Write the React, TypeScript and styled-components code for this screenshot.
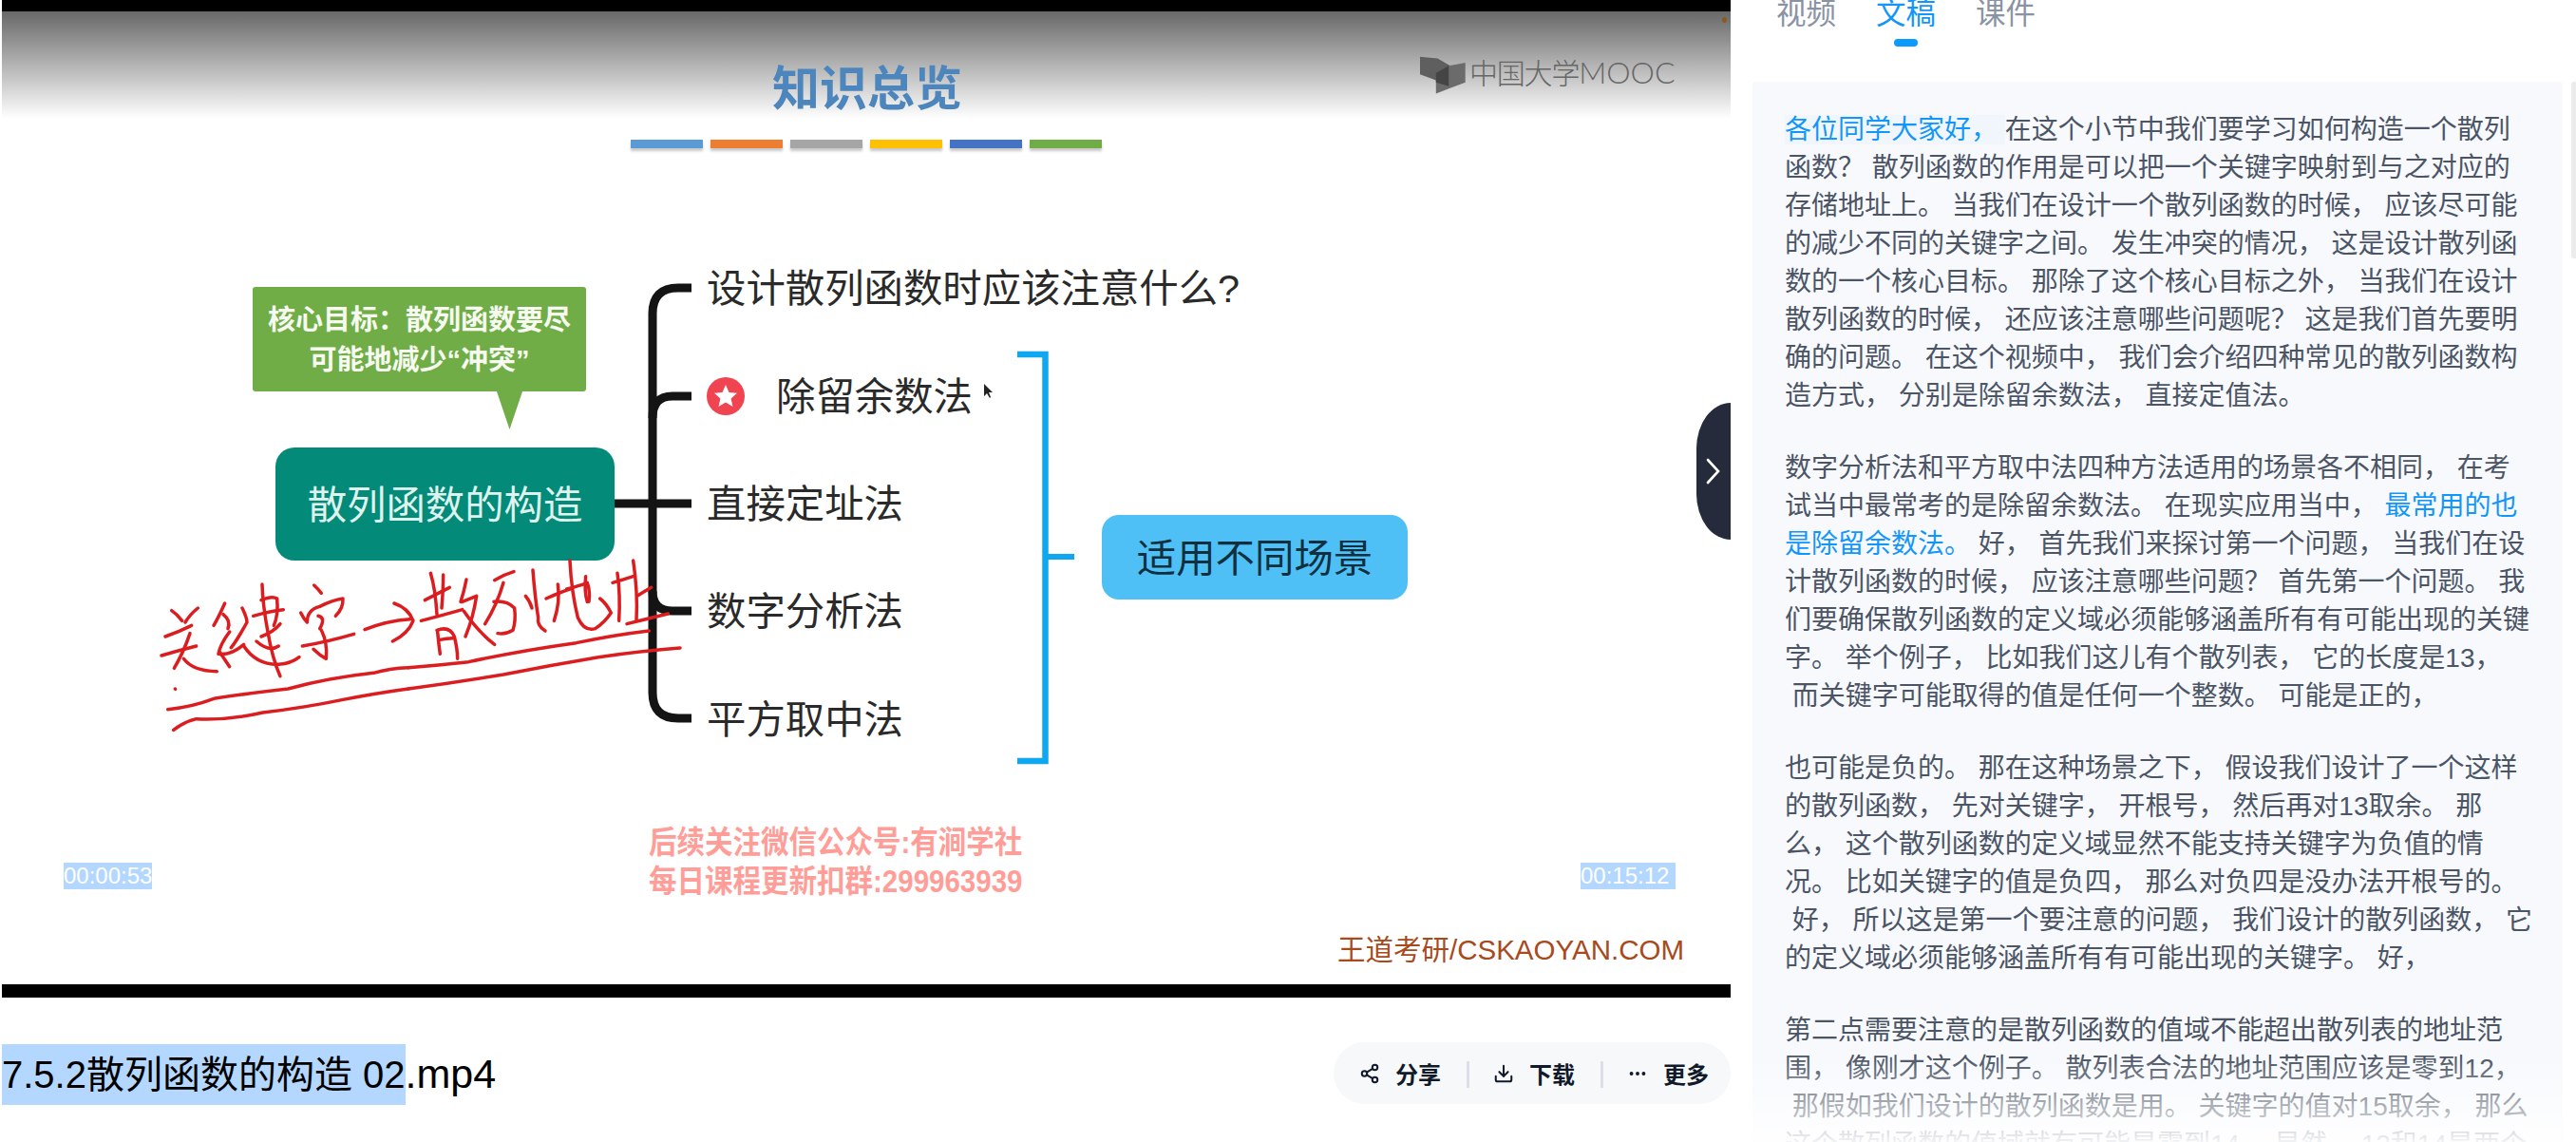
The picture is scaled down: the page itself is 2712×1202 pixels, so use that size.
import React from 'react'
import styled, { createGlobalStyle } from 'styled-components'
import { Download, Ellipsis, Share2 } from 'lucide-react'

const GlobalStyle = createGlobalStyle`
  html, body {
    margin: 0;
    padding: 0;
    background: #fff;
    overflow: hidden;
  }
  body {
    font-family: "Liberation Sans", "Noto Sans CJK SC", sans-serif;
  }
`

const Page = styled.div`
  width: 2712px;
  height: 1202px;
  display: flex;
  overflow: hidden;
`
const Main = styled.main`
  width: 1820px;
  margin-left: 2px;
  display: flex;
  flex-direction: column;
`
const Video = styled.section`
  position: relative;
  height: 1050px;
  box-sizing: border-box;
  border-top: 12px solid #000;
  border-bottom: 14px solid #000;
  background: #fff;
`
const SlideHead = styled.div`
  height: 113px;
  background: linear-gradient(#686868, #fff);
`
const SlideTitle = styled.div`
  position: absolute;
  left: 811px;
  top: 51px;
  font-size: 50px;
  line-height: 62px;
  font-weight: 700;
  color: #4d86bd;
  white-space: nowrap;
`
const Bars = styled.div`
  position: absolute;
  left: 662px;
  top: 135px;
  display: flex;
  gap: 8px;
`
const Bar = styled.div<{ $color: string }>`
  width: 76px;
  height: 9px;
  background: ${(p) => p.$color};
  box-shadow: 0 3px 3px rgba(0, 0, 0, 0.22);
`
const Logo = styled.div`
  position: absolute;
  left: 1493px;
  top: 43px;
  display: flex;
  align-items: center;
  gap: 4px;
  color: #666;
  line-height: 40px;
  font-weight: 300;
  white-space: nowrap;
`
const LogoCn = styled.span`
  font-family: "Noto Sans CJK SC", sans-serif;
  font-size: 30px;
  letter-spacing: -1.2px;
`
const LogoEn = styled.span`
  font-family: "Lato", "Liberation Sans", sans-serif;
  font-size: 32px;
`
const Speck = styled.div`
  position: absolute;
  left: 1811px;
  top: 6px;
  width: 5px;
  height: 6px;
  border-radius: 50%;
  background: #8a5a1e;
`
const Bubble = styled.div`
  position: absolute;
  left: 264px;
  top: 290px;
  width: 351px;
  height: 110px;
  box-sizing: border-box;
  padding-top: 2px;
  border-radius: 3px;
  background: #70ad47;
  color: #f6faf0;
  font-size: 29px;
  line-height: 42px;
  font-weight: 700;
  display: flex;
  flex-direction: column;
  align-items: center;
  justify-content: center;
  white-space: nowrap;

  &::after {
    content: '';
    position: absolute;
    left: 257px;
    top: 110px;
    width: 27px;
    height: 40px;
    background: #70ad47;
    clip-path: polygon(0 0, 100% 0, 50% 100%);
  }
`
const RootNode = styled.div`
  position: absolute;
  left: 288px;
  top: 459px;
  width: 357px;
  height: 119px;
  box-sizing: border-box;
  padding-bottom: 6px;
  border-radius: 20px;
  background: #038a78;
  color: #dff3ee;
  font-size: 41.4px;
  display: flex;
  align-items: center;
  justify-content: center;
  white-space: nowrap;
`
const SceneNode = styled.div`
  position: absolute;
  left: 1158px;
  top: 530px;
  width: 322px;
  height: 89px;
  box-sizing: border-box;
  padding-bottom: 6px;
  border-radius: 18px;
  background: #4fc0f6;
  color: #10303f;
  font-size: 41.4px;
  display: flex;
  align-items: center;
  justify-content: center;
  white-space: nowrap;
`
const BranchLabel = styled.div<{ $x: number; $y: number }>`
  position: absolute;
  left: ${(p) => p.$x}px;
  top: ${(p) => p.$y - 29}px;
  height: 60px;
  line-height: 60px;
  font-size: 41.4px;
  color: #2a2a2a;
  white-space: nowrap;
`
const Overlay = styled.svg`
  position: absolute;
  left: -2px;
  top: -12px;
  width: 1822px;
  height: 1050px;
  pointer-events: none;
`
const TimeLabel = styled.span<{ $x: number }>`
  position: absolute;
  left: ${(p) => p.$x}px;
  top: 896px;
  height: 28px;
  line-height: 28px;
  font-size: 24px;
  color: #fff;
  background: #b3d7ff;
  white-space: pre;
`
const Watermark = styled.div`
  position: absolute;
  left: 681px;
  top: 855px;
  color: #ff9e98;
  font-size: 29.5px;
  line-height: 36px;
  font-weight: 700;
  white-space: nowrap;
  transform: scaleY(1.12);
  transform-origin: 0 0;
`
const Credit = styled.div`
  position: absolute;
  left: 1406px;
  top: 970px;
  color: #a84a1c;
  font-size: 29.5px;
  line-height: 36px;
  white-space: nowrap;
`
const Handle = styled.button`
  position: absolute;
  right: 0;
  top: 412px;
  width: 36px;
  height: 144px;
  padding: 0;
  border: 0;
  border-radius: 36px 0 0 36px / 48px 0 0 48px;
  background: #262b3c;
  display: flex;
  align-items: center;
  justify-content: center;
`
const TitleRow = styled.div`
  flex: 1;
  padding-top: 47px;
  display: flex;
  justify-content: space-between;
  align-items: flex-start;
`
const FileName = styled.div`
  font-size: 40px;
  line-height: 64px;
  margin-top: 1px;
  color: #000;
  white-space: pre;
`
const Selected = styled.span`
  display: inline-block;
  height: 64px;
  background: #b3d7ff;
`
const Extension = styled.span`
  font-size: 43px;
`
const Actions = styled.div`
  height: 65px;
  box-sizing: border-box;
  padding: 0 23px 0 27px;
  border-radius: 33px;
  background: #f7f8fa;
  display: flex;
  align-items: center;
  color: #111a2b;
`
const Action = styled.div`
  display: flex;
  align-items: center;
  gap: 16px;
  font-size: 24px;
  font-weight: 700;
  white-space: nowrap;
`
const Sep = styled.div`
  width: 3px;
  height: 28px;
  margin: 2px 25px 0 27px;
  background: #dcdfe8;
`
const Aside = styled.aside`
  position: relative;
  flex: 1;
  display: flex;
  flex-direction: column;
`
const Tabs = styled.nav`
  height: 86px;
  padding-left: 48px;
  display: flex;
  gap: 42px;
  flex: none;
`
const Tab = styled.div<{ $active?: boolean }>`
  position: relative;
  height: 28px;
  line-height: 28px;
  font-size: 31.5px;
  color: ${(p) => (p.$active ? '#1296fa' : '#8a93a3')};

  ${(p) =>
    p.$active &&
    `
    &::after {
      content: '';
      position: absolute;
      left: 19px;
      top: 41px;
      width: 25px;
      height: 8px;
      border-radius: 4px;
      background: #0a9bff;
    }
  `}
`
const Card = styled.div`
  position: relative;
  flex: 1;
  margin: 0 14px 0 23px;
  padding: 31px 0 0 34px;
  border-radius: 4px;
  overflow: hidden;
  background: #f7f9fd;
  color: #4b5565;
  font-size: 28px;
  line-height: 40px;

  &::after {
    content: '';
    position: absolute;
    left: 0;
    right: 0;
    bottom: 0;
    height: 90px;
    background: linear-gradient(rgba(248, 250, 253, 0), rgba(255, 255, 255, 0.92));
  }
`
const Paragraph = styled.p`
  margin: 0 0 36px;
`
const Line = styled.div`
  height: 40px;
  white-space: pre;
`
const Hl = styled.span<{ $tint?: boolean }>`
  color: #1296fa;
  background: ${(p) => (p.$tint ? '#f1f6fd' : 'transparent')};
`
const ScrollThumb = styled.div`
  position: absolute;
  right: 0;
  top: 86px;
  width: 5px;
  height: 186px;
  border-radius: 3px 0 0 3px;
  background: #ececec;
`

// | toggles the highlight, ~ and ^ stand for the full-width comma and question mark
const transcript: string[][] = [
  [
    '|各位同学大家好~ |在这个小节中我们要学习如何构造一个散列',
    '函数^ 散列函数的作用是可以把一个关键字映射到与之对应的',
    '存储地址上。当我们在设计一个散列函数的时候~ 应该尽可能',
    '的减少不同的关键字之间。发生冲突的情况~ 这是设计散列函',
    '数的一个核心目标。那除了这个核心目标之外~ 当我们在设计',
    '散列函数的时候~ 还应该注意哪些问题呢^ 这是我们首先要明',
    '确的问题。在这个视频中~ 我们会介绍四种常见的散列函数构',
    '造方式~ 分别是除留余数法~ 直接定值法。',
  ],
  [
    '数字分析法和平方取中法四种方法适用的场景各不相同~ 在考',
    '试当中最常考的是除留余数法。在现实应用当中~ |最常用的也',
    '|是除留余数法。|好~ 首先我们来探讨第一个问题~ 当我们在设',
    '计散列函数的时候~ 应该注意哪些问题^ 首先第一个问题。我',
    '们要确保散列函数的定义域必须能够涵盖所有有可能出现的关键',
    '字。举个例子~ 比如我们这儿有个散列表~ 它的长度是13~',
    ' 而关键字可能取得的值是任何一个整数。可能是正的~',
  ],
  [
    '也可能是负的。那在这种场景之下~ 假设我们设计了一个这样',
    '的散列函数~ 先对关键字~ 开根号~ 然后再对13取余。那',
    '么~ 这个散列函数的定义域显然不能支持关键字为负值的情',
    '况。比如关键字的值是负四~ 那么对负四是没办法开根号的。',
    ' 好~ 所以这是第一个要注意的问题~ 我们设计的散列函数~ 它',
    '的定义域必须能够涵盖所有有可能出现的关键字。好~',
  ],
  [
    '第二点需要注意的是散列函数的值域不能超出散列表的地址范',
    '围~ 像刚才这个例子。散列表合法的地址范围应该是零到12~',
    ' 那假如我们设计的散列函数是用。关键字的值对15取余~ 那么',
    '这个散列函数的值域就有可能是零到14。显然~ 12和14是两个',
  ],
]

const fullWidth = (s: string) => s.replace(/~/g, '\uFF0C').replace(/\^/g, '\uFF1F')

function renderLine(line: string, first: boolean) {
  // the transcript puts a space after each full stop inside a line
  return line
    .replace(/。(?=.)/g, '。 ')
    .split('|')
    .map((part, k) =>
      k % 2 === 1 ? (
        <Hl key={k} $tint={first}>
          {fullWidth(part)}
        </Hl>
      ) : (
        <React.Fragment key={k}>{fullWidth(part)}</React.Fragment>
      )
    )
}

const barColors = ['#5b9bd5', '#ed7d31', '#a5a5a5', '#ffc000', '#4472c4', '#70ad47']

// handwriting, traced at 3x from the recording
const inkLeft = [
  'M62 158Q80 170 95 190', 'M145 150Q120 170 105 195', 'M42 240Q85 225 125 205', 'M30 300Q80 285 140 270',
  'M120 230Q100 290 70 340', 'M100 310Q130 350 205 350',
  'M230 135Q210 180 195 205', 'M225 170Q250 190 240 215', 'M245 225Q215 265 210 295Q250 300 290 265',
  'M215 290Q235 320 245 335', 'M285 150Q300 180 300 195Q270 250 250 275',
  'M348 75Q350 140 365 220Q380 310 405 365', 'M320 175Q370 160 415 155', 'M345 125Q380 110 395 120Q400 170 385 205',
  'M345 240Q385 225 405 200', 'M330 255Q370 290 400 270', 'M290 270Q330 330 400 328Q440 325 465 305',
  'M512 78Q525 90 535 103', 'M470 165Q480 185 490 195Q490 155 530 145Q570 125 603 120Q605 150 580 175',
  'M525 175Q550 180 530 215', 'M475 270Q560 255 638 232', 'M535 220Q555 260 550 310Q530 300 510 280',
  'M672 218Q740 190 815 185', 'M765 135Q810 150 825 190Q810 230 760 255',
  'M73 405L74 406',
  'M50 470Q120 465 200 435Q300 420 430 405Q560 370 700 355Q750 340 810 338',
  'M68 535Q100 510 140 500Q240 505 350 480Q480 465 600 440Q700 420 810 405',
]
const inkRight = [
  'M0 338Q100 330 190 320Q350 285 530 260Q650 235 760 222',
  'M0 405Q150 385 300 360Q450 330 600 305Q740 285 858 276',
  'M70 40Q85 90 90 170', 'M110 45Q110 90 105 150', 'M52 125Q100 100 130 85', 'M40 190Q100 175 170 155',
  'M92 225Q95 260 100 295', 'M90 220Q130 205 145 240Q155 280 155 310', 'M100 250Q120 245 140 245',
  'M183 60Q175 100 165 130', 'M170 130Q195 120 215 112Q205 180 180 240', 'M175 160Q220 225 272 265',
  'M272 62Q300 45 333 35', 'M300 70Q280 140 242 200', 'M270 130Q310 125 335 150Q340 190 330 220Q305 235 282 230',
  'M370 112Q385 130 390 150', 'M393 30Q400 120 410 180Q405 205 432 222',
  'M435 120Q480 100 510 90', 'M472 75Q480 130 460 190', 'M500 90Q540 80 565 70Q575 100 570 130', 'M560 50Q555 100 565 130',
  'M510 0Q515 100 535 180Q555 225 590 215Q620 195 640 165Q625 135 605 120',
  'M645 70Q680 60 710 50', 'M660 40Q670 110 665 190', 'M710 0Q725 100 720 190', 'M725 110Q750 95 767 85', 'M690 200Q770 180 820 168',
]

function App() {
  return (
    <Page>
      <GlobalStyle />
      <Main>
        <Video>
          <SlideHead />
          <SlideTitle>知识总览</SlideTitle>
          <Bars>
            {barColors.map((c) => (
              <Bar key={c} $color={c} />
            ))}
          </Bars>
          <Logo>
            <svg width="48" height="40" viewBox="45 78 143 118">
              <polygon points="45,80 100,85 140,108 140,170 45,135" fill="#5f5f5f" />
              <polygon points="187,98 135,108 95,130 95,195 187,160" fill="#6b6b6b" />
              <polygon points="95,130 135,108 135,172 95,160" fill="#454545" />
            </svg>
            <span>
              <LogoCn>中国大学</LogoCn>
              <LogoEn>MOOC</LogoEn>
            </span>
          </Logo>
          <Speck />

          <Bubble>
            <div>{'核心目标\uFF1A散列函数要尽'}</div>
            <div>可能地减少“冲突”</div>
          </Bubble>
          <RootNode>散列函数的构造</RootNode>
          <BranchLabel $x={742} $y={291}>设计散列函数时应该注意什么?</BranchLabel>
          <BranchLabel $x={815} $y={405}>除留余数法</BranchLabel>
          <BranchLabel $x={742} $y={518}>直接定址法</BranchLabel>
          <BranchLabel $x={742} $y={631}>数字分析法</BranchLabel>
          <BranchLabel $x={742} $y={745}>平方取中法</BranchLabel>
          <SceneNode>适用不同场景</SceneNode>

          <Overlay viewBox="0 0 1822 1050">
            <g fill="none" stroke="#141414" strokeWidth="9">
              <path d="M728 303H714Q687 303 687 330V729Q687 756 714 756H728" />
              <path d="M728 417H708Q687 417 687 440" />
              <path d="M728 643H708Q687 643 687 622" />
              <path d="M647 530H728" />
            </g>
            <g fill="none" stroke="#0fa8f0">
              <path d="M1071 373H1100.5V801H1071" strokeWidth="6.5" />
              <path d="M1100 586H1131" strokeWidth="6" />
            </g>
            <circle cx="764" cy="417" r="20" fill="#f04450" />
            <polygon
              points="764,405 767.5,413 776,413.8 769.6,419.6 771.5,428 764,423.6 756.5,428 758.4,419.6 752,413.8 760.5,413"
              fill="#fff"
            />
            <polygon points="1036,404 1036,417 1039,414 1042,419 1043,418 1041,413 1045,413" fill="#222" />
            <g fill="none" stroke="#dc1d20" strokeWidth="10.5" strokeLinecap="round" strokeLinejoin="round">
              <g transform="translate(160 590) scale(0.3333)">
                {inkLeft.map((d) => (
                  <path key={d} d={d} />
                ))}
              </g>
              <g transform="translate(430 590) scale(0.3333)">
                {inkRight.map((d) => (
                  <path key={d} d={d} />
                ))}
              </g>
            </g>
          </Overlay>

          <TimeLabel $x={65}>00:00:53</TimeLabel>
          <TimeLabel $x={1662}>00:15:12 </TimeLabel>
          <Watermark>
            <div>后续关注微信公众号:有涧学社</div>
            <div>每日课程更新扣群:299963939</div>
          </Watermark>
          <Credit>王道考研/CSKAOYAN.COM</Credit>
          <Handle aria-label="收起">
            <svg width="18" height="28" viewBox="0 0 18 28" fill="none">
              <path d="M3 2L14 14L3 26" stroke="#fff" strokeWidth="2.6" strokeLinecap="round" />
            </svg>
          </Handle>
        </Video>
        <TitleRow>
          <FileName>
            <Selected>7.5.2散列函数的构造 02</Selected>
            <Extension>.mp4</Extension>
          </FileName>
          <Actions>
            <Action>
              <Share2 size={22} strokeWidth={2.2} />
              分享
            </Action>
            <Sep />
            <Action>
              <Download size={22} strokeWidth={2.2} />
              下载
            </Action>
            <Sep />
            <Action>
              <Ellipsis size={22} strokeWidth={2.2} />
              更多
            </Action>
          </Actions>
        </TitleRow>
      </Main>
      <Aside>
        <Tabs>
          <Tab>视频</Tab>
          <Tab $active>文稿</Tab>
          <Tab>课件</Tab>
        </Tabs>
        <Card>
          {transcript.map((lines, i) => (
            <Paragraph key={i}>
              {lines.map((line, j) => (
                <Line key={j}>{renderLine(line, i === 0 && j === 0)}</Line>
              ))}
            </Paragraph>
          ))}
        </Card>
        <ScrollThumb />
      </Aside>
    </Page>
  )
}

export default App
